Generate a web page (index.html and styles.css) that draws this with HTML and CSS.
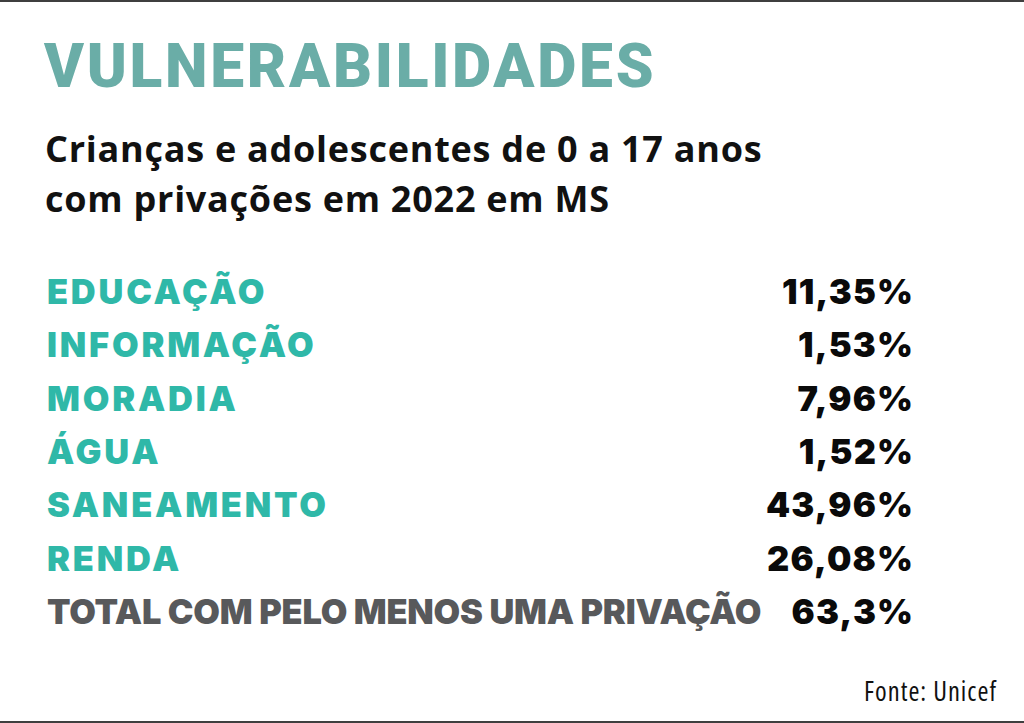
FILE: index.html
```html
<!DOCTYPE html>
<html lang="pt-BR">
<head>
<meta charset="utf-8">
<title>Vulnerabilidades</title>
<link rel="stylesheet" href="styles.css">
</head>
<body>
<div class="page">
  <h1 class="title">VULNERABILIDADES</h1>
  <p class="subtitle">Crianças e adolescentes de 0 a 17 anos<br>com privações em 2022 em MS</p>
  <div class="table">
    <div class="label">EDUCAÇÃO</div><div class="value">11,35%</div>
    <div class="label">INFORMAÇÃO</div><div class="value">1,53%</div>
    <div class="label">MORADIA</div><div class="value">7,96%</div>
    <div class="label">ÁGUA</div><div class="value">1,52%</div>
    <div class="label">SANEAMENTO</div><div class="value">43,96%</div>
    <div class="label">RENDA</div><div class="value">26,08%</div>
    <div class="label total">TOTAL COM PELO MENOS UMA PRIVAÇÃO</div><div class="value">63,3%</div>
  </div>
  <p class="source">Fonte: Unicef</p>
</div>
</body>
</html>
```
FILE: styles.css
```css
html, body {
  margin: 0;
  padding: 0;
  background: #fff;
}
.page {
  width: 1024px;
  height: 723px;
  box-sizing: border-box;
  border-top: 2px solid #3f3f3f;
  border-bottom: 2px solid #3f3f3f;
  padding: 35px 0 0 0;
  display: flex;
  flex-direction: column;
}
.title {
  margin: 0 0 0 44px;
  font-family: Roboto, "Liberation Sans", sans-serif;
  font-weight: 900;
  font-size: 60.5px;
  line-height: 60.5px;
  letter-spacing: 2.7px;
  color: #6aada7;
}
.subtitle {
  margin: 26.5px 0 0 45px;
  font-family: "Open Sans", "Liberation Sans", sans-serif;
  font-weight: 700;
  font-size: 36px;
  line-height: 50px;
  letter-spacing: 0.75px;
  color: #111;
}
.table {
  margin: 41px 0 0 47px;
  width: 866px;
  display: grid;
  grid-template-columns: 1fr auto;
  grid-auto-rows: 53.33px;
  font-family: Inter, "Open Sans", sans-serif;
  font-weight: 900;
  font-size: 34.4px;
  line-height: 53.33px;
}
.label {
  color: #2fb8a8;
  letter-spacing: 2.8px;
}
.label.total {
  color: #58595b;
  letter-spacing: -0.2px;
}
.value {
  color: #0a0a0a;
  text-align: right;
  letter-spacing: 1.2px;
  margin-right: -1.2px;
}
.source {
  margin: 38px 27px 0 0;
  align-self: flex-end;
  font-family: "Open Sans", "Liberation Sans", sans-serif;
  font-size: 26.5px;
  font-stretch: 87.5%;
  line-height: 30px;
  letter-spacing: 1px;
  color: #111;
}
```
